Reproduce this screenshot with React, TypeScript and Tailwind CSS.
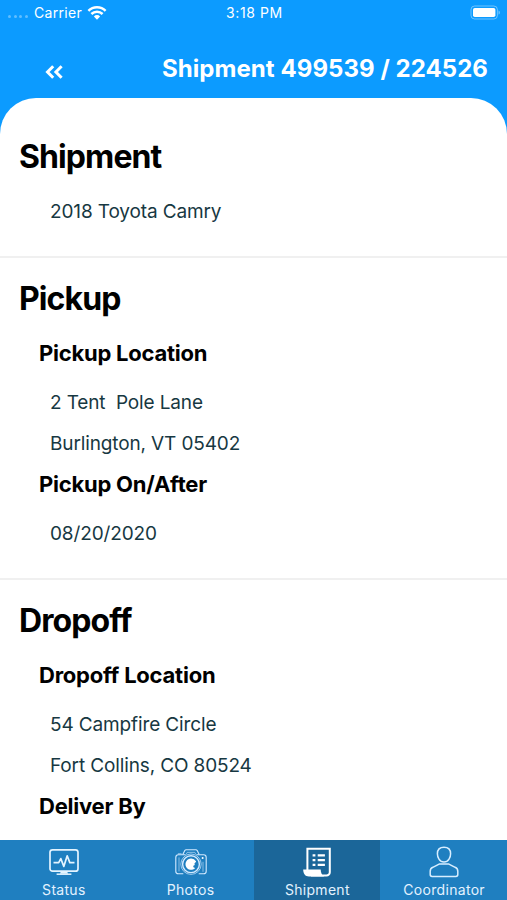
import React from 'react';
import { clsx } from 'clsx';

interface DetailGroup {
  title?: string;
  lines: string[];
}

interface DetailSection {
  title: string;
  groups: DetailGroup[];
}

const sections: DetailSection[] = [
  {
    title: 'Shipment',
    groups: [{ lines: ['2018 Toyota Camry'] }],
  },
  {
    title: 'Pickup',
    groups: [
      { title: 'Pickup Location', lines: ['2 Tent  Pole Lane', 'Burlington, VT 05402'] },
      { title: 'Pickup On/After', lines: ['08/20/2020'] },
    ],
  },
  {
    title: 'Dropoff',
    groups: [
      { title: 'Dropoff Location', lines: ['54 Campfire Circle', 'Fort Collins, CO 80524'] },
      { title: 'Deliver By', lines: [] },
    ],
  },
];

const WifiIcon = () => (
  <svg width="20" height="16" viewBox="0 0 20 16" fill="none" stroke="white" strokeWidth="2.5">
    <path d="M1.4 5.9a12.2 12.2 0 0 1 17.2 0" />
    <path d="M4.4 9a8 8 0 0 1 11.2 0" />
    <path d="M6.9 11.4a4.4 4.4 0 0 1 6.2 0L10 14.8Z" fill="white" stroke="none" />
  </svg>
);

const BatteryIcon = () => (
  <svg width="31" height="15" viewBox="0 0 31 15" fill="none">
    <rect x="1" y="1" width="26.4" height="13" rx="3.6" stroke="white" strokeOpacity="0.4" />
    <rect x="3" y="3" width="22.4" height="9" rx="1.8" fill="white" />
    <path d="M28.6 5.4v4.2c1.6-.6 1.6-3.6 0-4.2Z" fill="white" fillOpacity="0.5" />
  </svg>
);

const BackIcon = () => (
  <svg width="18" height="14" viewBox="0 0 18 14" fill="none" stroke="white" strokeWidth="3">
    <path d="M8.2 1.2 2.5 7l5.7 5.8M16.6 1.2 10.9 7l5.7 5.8" />
  </svg>
);

const StatusIcon = () => (
  <svg width="32" height="32" viewBox="0 0 32 32" fill="none" stroke="#e4f4ff" strokeLinejoin="round">
    <rect x="2" y="3.8" width="28" height="21.4" rx="2.5" strokeWidth="1.7" />
    <path d="M5.5 16.6h5.2l2.1-4 3 7.8L19.2 9.8l2.6 6.8h4.7" strokeWidth="1.7" />
    <path d="M12.8 25.5h6.4l.8 2.2h-8Z" fill="#e4f4ff" stroke="none" />
    <path d="M8.6 28.2h14.8" strokeWidth="1.5" />
  </svg>
);

const CameraIcon = () => (
  <svg width="34" height="32" viewBox="0 0 34 32" fill="none" stroke="#d3eaff" strokeWidth="1.1" strokeLinejoin="round">
    <path d="M8.8 8.5 10.8 4.6Q11.2 3.8 12.2 3.8h9.6q1 0 1.4.8l2 3.9" />
    <path d="M12.2 8.2 13.2 6.4h7.6l1 1.8" strokeWidth="0.6" />
    <path d="M9.3 27.8H4.4q-2.6 0-2.6-2.6V11.4q0-2.6 2.6-2.6h7.2M24.7 27.8h4.9q2.6 0 2.6-2.6V11.4q0-2.6-2.6-2.6h-7.2" />
    <path d="M5 11.4v14M4.2 8.4V7.6h3.4M29 15.8v10" strokeWidth="0.6" />
    <circle cx="28.6" cy="12" r="1" fill="white" stroke="none" />
    <circle cx="17" cy="18.2" r="10.2" strokeWidth="0.7" />
    <circle cx="17" cy="18.2" r="8.4" strokeWidth="1.4" />
    <path
      d="M17 12.6a5.6 5.6 0 1 0 4.2 9.4q-2-.3-2-1.5 0-1.2 1.7-1.4-1.3-1.7.4-2.7 1-.3.7-1.2A5.6 5.6 0 0 0 17 12.6Z"
      fill="white"
      stroke="none"
    />
  </svg>
);

const ShipmentIcon = () => (
  <svg width="32" height="32" viewBox="0 0 32 32" fill="none" stroke="white" strokeWidth="2">
    <path d="M6.4 24V2.8h22.4v23.4a3.3 3.3 0 0 1-3.3 3.3H10" />
    <path
      d="M2.2 23.6h17.5c0 3.4 1.3 5.8 3.6 7H8c-3.8 0-5.8-2.8-5.8-7Z"
      fill="white"
      stroke="none"
    />
    <path d="M11.6 9.3h2.8M16.7 9.3h7.2M11.6 14.1h2.8M16.7 14.1h7.2M11.6 18.9h2.8M16.7 18.9h7.2" strokeWidth="2.3" />
  </svg>
);

const CoordinatorIcon = () => (
  <svg width="32" height="32" viewBox="0 0 32 32" fill="none" stroke="#d8eeff" strokeWidth="1.5" strokeLinejoin="round">
    <path d="M16 1.2c4.2 0 6.6 2.6 6.6 6.5 0 3.4-2 8.4-6.6 8.4s-6.6-5-6.6-8.4c0-3.9 2.4-6.5 6.6-6.5Z" />
    <path d="M11.6 17.9h8.8l6.8 3.4q2.6 1.2 2.6 4v3.3q0 1.9-1.9 1.9H4.1q-1.9 0-1.9-1.9v-3.3q0-2.8 2.6-4Z" />
  </svg>
);

const tabs = [
  { label: 'Status', icon: <StatusIcon /> },
  { label: 'Photos', icon: <CameraIcon /> },
  { label: 'Shipment', icon: <ShipmentIcon />, active: true },
  { label: 'Coordinator', icon: <CoordinatorIcon /> },
];

const StatusBar = () => (
  <div className="grid h-[25px] grid-cols-3 items-center pl-2 pr-1.5 text-[14px] text-white">
    <div className="flex items-center">
      <div className="mt-2 flex gap-[2.5px]">
        {[0, 1, 2, 3].map(dot => (
          <span key={dot} className="size-[3px] rounded-full bg-white/35" />
        ))}
      </div>
      <span className="ml-[6.5px] mr-[5px] tracking-[0.3px]">Carrier</span>
      <WifiIcon />
    </div>
    <span className="text-center tracking-[0.6px]">3:18 PM</span>
    <div className="flex justify-end">
      <BatteryIcon />
    </div>
  </div>
);

const Section: React.FC<{ section: DetailSection }> = ({ section }) => (
  <section className="border-b-2 border-[#f0f0f0] pb-6 pt-[21px] first:pt-[39px]">
    <h2 className="mb-[14px] pl-[19px] text-[32px] font-bold leading-10 tracking-[-0.9px] text-black">
      {section.title}
    </h2>
    {section.groups.map((group, index) => (
      <div key={index}>
        {group.title && (
          <h3 className="h-[49px] pl-[39px] text-[22px] font-bold leading-[41px] tracking-[-0.23px] text-black">
            {group.title}
          </h3>
        )}
        {group.lines.map(line => (
          <p
            key={line}
            className="whitespace-pre pl-[50px] text-[19px] leading-[41px] tracking-[-0.13px] text-[#173842]"
          >
            {line}
          </p>
        ))}
      </div>
    ))}
  </section>
);

const TabBar = () => (
  <nav className="grid h-[60px] shrink-0 grid-cols-4 bg-[#1f7fc0]">
    {tabs.map(({ label, icon, active }) => (
      <button
        key={label}
        type="button"
        className={clsx(
          'flex flex-col items-center pl-px pt-1.5 text-[14px] leading-6 tracking-[0.3px] text-[#e3f2ff]',
          active && 'bg-[#1b6699]',
        )}
      >
        {icon}
        <span>{label}</span>
      </button>
    ))}
  </nav>
);

const App: React.FC = () => (
  <div className="flex h-screen flex-col overflow-hidden bg-[#0c9bff] font-['Inter',sans-serif]">
    <StatusBar />
    <header className="flex h-[73px] shrink-0 items-center justify-between pl-[45px] pr-[19px] pt-[14px]">
      <button type="button" aria-label="Back" className="mt-1.5">
        <BackIcon />
      </button>
      <h1 className="text-[24px] font-bold tracking-[0.06px] text-white">Shipment 499539 / 224526</h1>
    </header>
    <main className="min-h-0 flex-1 overflow-hidden rounded-t-[36px] bg-white">
      {sections.map(section => (
        <Section key={section.title} section={section} />
      ))}
    </main>
    <TabBar />
  </div>
);

export default App;
